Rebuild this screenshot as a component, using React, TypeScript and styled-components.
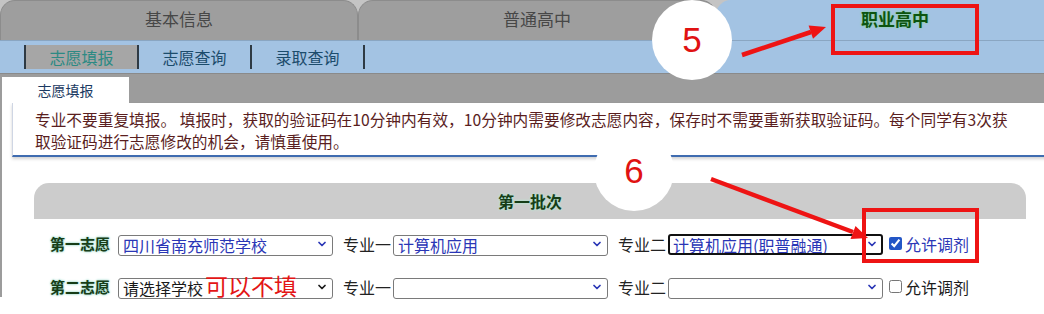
import React from "react";
import styled, { createGlobalStyle } from "styled-components";
import { ChevronDown } from "lucide-react";

const GlobalStyle = createGlobalStyle`
  html, body {
    margin: 0;
    padding: 0;
    background: #ffffff;
    overflow: hidden;
  }
  body {
    font-family: "Noto Sans CJK SC", "Noto Sans", sans-serif;
  }
`;

const Page = styled.div`
  position: relative;
  width: 1074px;
  height: 314px;
  overflow: hidden;
`;

const TabBar = styled.div`
  display: grid;
  grid-template-columns: repeat(3, 358px);
  height: 40px;
  background: #c4c4c4;
`;

const Tab = styled.div<{ active?: boolean }>`
  display: flex;
  justify-content: center;
  padding-top: 6px;
  box-sizing: border-box;
  background: ${({ active }) => (active ? "#a3c3e3" : "#9e9e9e")};
  border: 1px solid ${({ active }) => (active ? "#a3c3e3" : "#8c8c8c")};
  border-bottom: none;
  border-radius: 15px 15px 0 0;
  font-size: 17px;
  line-height: 24px;
  color: ${({ active }) => (active ? "#0d5410" : "#474747")};
  font-weight: ${({ active }) => (active ? 700 : 400)};
  text-shadow: ${({ active }) =>
    active ? "0 0 2px #7fc7a0, 0 0 3px #9fd9b9" : "none"};
`;

const SubNav = styled.div`
  display: flex;
  align-items: center;
  height: 34px;
  box-sizing: border-box;
  padding-left: 24px;
  background: #a3c3e3;
  border-top: 1px solid #8aa6c2;
  border-bottom: 1px solid #8a8a8a;
`;

const NavItem = styled.div<{ active?: boolean }>`
  width: 111px;
  height: 24px;
  display: flex;
  align-items: center;
  justify-content: center;
  border-left: 2px solid #2e3a44;
  background: ${({ active }) => (active ? "#a6a6a6" : "transparent")};
  color: ${({ active }) => (active ? "#2c8a84" : "#1c4c6c")};
  font-size: 16px;

  &:last-child {
    border-right: 2px solid #2e3a44;
  }
`;

const Content = styled.div`
  border-left: 2px solid #9c9c9c;
`;

const SubTabBand = styled.div`
  display: flex;
  align-items: flex-end;
  height: 29px;
  background: #9c9c9c;
`;

const SubTab = styled.div`
  width: 127px;
  height: 26px;
  display: flex;
  align-items: center;
  justify-content: center;
  background: #ffffff;
  color: #1b3a62;
  font-size: 14px;
`;

const Notice = styled.div`
  margin-left: 10px;
  padding: 6px 0 2px 22px;
  border-left: 1px solid #cfd6e4;
  border-bottom: 2px solid #3f6cb0;
  box-shadow: 0 2px 3px rgba(0, 0, 0, 0.18);
  color: #5a1e1e;
  font-size: 15.7px;
  line-height: 22px;
  white-space: nowrap;
`;

const Section = styled.div`
  margin: 26px 48px 0 32px;
`;

const SectionHead = styled.div`
  height: 36px;
  display: flex;
  align-items: center;
  justify-content: center;
  background: #cccccc;
  border-radius: 15px 15px 0 0;
  font-size: 16px;
  font-weight: 700;
  color: #173d17;
  text-shadow: 0 0 2px #a8e0c8, 0 0 3px #c4eedc;
`;

const Row = styled.div<{ first?: boolean }>`
  display: flex;
  align-items: center;
  height: 21px;
  margin-top: ${({ first }) => (first ? 14 : 22)}px;
  padding-left: 16px;
`;

const Wish = styled.span`
  width: 60px;
  margin-right: 8px;
  font-size: 15px;
  font-weight: 700;
  color: #173d17;
  text-shadow: 0 0 2px #8fd0c0, 0 0 3px #b6e6da;
  white-space: nowrap;
`;

const FieldLabel = styled.span`
  margin: 0 2px 0 10px;
  font-size: 16px;
  color: #222;
  white-space: nowrap;
`;

const SelectWrap = styled.div`
  position: relative;
  width: 215px;
  height: 21px;
  flex-shrink: 0;
`;

const Select = styled.select<{ tone: string; focused?: boolean }>`
  appearance: none;
  width: 100%;
  height: 100%;
  box-sizing: border-box;
  margin: 0;
  padding: 0 20px 0 ${({ focused }) => (focused ? 3 : 4)}px;
  border: ${({ focused }) => (focused ? "2px solid #111" : "1px solid #7a7a7a")};
  border-radius: 3px;
  background: #fff;
  color: ${({ tone }) => tone};
  font-family: "Noto Sans CJK SC", sans-serif;
  font-size: 16px;
  line-height: 19px;
  outline: none;
`;

const Chevron = styled(ChevronDown)<{ tone: string }>`
  position: absolute;
  right: 5px;
  top: 5px;
  color: ${({ tone }) => tone};
  pointer-events: none;
`;

const Hint = styled.span`
  position: absolute;
  left: 87px;
  top: -4px;
  font-size: 23px;
  line-height: 26px;
  color: #e31515;
  pointer-events: none;
`;

const Check = styled.input`
  width: 13px;
  height: 13px;
  margin: 0 3px 0 6px;
  accent-color: #2356c6;
`;

const Allow = styled.span<{ tone: string }>`
  font-size: 16px;
  color: ${({ tone }) => tone};
  white-space: nowrap;
`;

const Bubble = styled.div<{ x: number; y: number }>`
  position: absolute;
  left: ${({ x }) => x - 40}px;
  top: ${({ y }) => y - 40}px;
  width: 80px;
  height: 80px;
  border-radius: 50%;
  background: #ffffff;
  display: flex;
  align-items: center;
  justify-content: center;
  font-family: "Liberation Sans", Arial, sans-serif;
  font-size: 35px;
  color: #e01212;
`;

const Frame = styled.div<{ x: number; y: number; w: number; h: number }>`
  position: absolute;
  left: ${({ x }) => x}px;
  top: ${({ y }) => y}px;
  width: ${({ w }) => w}px;
  height: ${({ h }) => h}px;
  box-sizing: border-box;
  border: 4px solid #ee1414;
`;

const Arrows = styled.svg`
  position: absolute;
  left: 0;
  top: 0;
  pointer-events: none;
`;

const BLUE = "#2a36b6";
const BLACK = "#1a1a1a";

interface IFieldProps {
  value: string;
  tone: string;
  focused?: boolean;
  hint?: string;
}

const Field = ({ value, tone, focused, hint }: IFieldProps) => (
  <SelectWrap>
    <Select tone={tone} focused={focused} defaultValue={value}>
      <option value={value}>{value}</option>
    </Select>
    <Chevron tone={tone} size={12} strokeWidth={3.5} />
    {hint ? <Hint>{hint}</Hint> : null}
  </SelectWrap>
);

const App = () => {
  return (
    <Page>
      <GlobalStyle />
      <TabBar>
        <Tab>基本信息</Tab>
        <Tab>普通高中</Tab>
        <Tab active>职业高中</Tab>
      </TabBar>
      <SubNav>
        <NavItem active>志愿填报</NavItem>
        <NavItem>志愿查询</NavItem>
        <NavItem>录取查询</NavItem>
      </SubNav>
      <Content>
        <SubTabBand>
          <SubTab>志愿填报</SubTab>
        </SubTabBand>
        <Notice>
          专业不要重复填报。 填报时，获取的验证码在10分钟内有效，10分钟内需要修改志愿内容，保存时不需要重新获取验证码。每个同学有3次获
          <br />
          取验证码进行志愿修改的机会，请慎重使用。
        </Notice>
        <Section>
          <SectionHead>第一批次</SectionHead>
          <Row first>
            <Wish>第一志愿</Wish>
            <Field value="四川省南充师范学校" tone={BLUE} />
            <FieldLabel>专业一</FieldLabel>
            <Field value="计算机应用" tone={BLUE} />
            <FieldLabel>专业二</FieldLabel>
            <Field value="计算机应用(职普融通)" tone={BLUE} focused />
            <Check type="checkbox" defaultChecked />
            <Allow tone={BLUE}>允许调剂</Allow>
          </Row>
          <Row>
            <Wish>第二志愿</Wish>
            <Field value="请选择学校" tone={BLACK} hint="可以不填" />
            <FieldLabel>专业一</FieldLabel>
            <Field value="" tone={BLUE} />
            <FieldLabel>专业二</FieldLabel>
            <Field value="" tone={BLUE} />
            <Check type="checkbox" />
            <Allow tone={BLACK}>允许调剂</Allow>
          </Row>
        </Section>
      </Content>

      <Bubble x={692} y={40}>5</Bubble>
      <Bubble x={634} y={171}>6</Bubble>
      <Frame x={831} y={4} w={148} h={51} />
      <Frame x={862} y={208} w={117} h={55} />
      <Arrows width={1044} height={314} viewBox="0 0 1044 314">
        <line x1={742} y1={55} x2={811} y2={32} stroke="#ee1414" strokeWidth={4.5} />
        <polygon points="826,27 813,38.7 808.6,25.5" fill="#ee1414" />
        <line x1={711} y1={179} x2={853} y2={232} stroke="#ee1414" strokeWidth={4.5} />
        <polygon points="868,238 850.5,239 855.5,225.9" fill="#ee1414" />
      </Arrows>
    </Page>
  );
};

export default App;
